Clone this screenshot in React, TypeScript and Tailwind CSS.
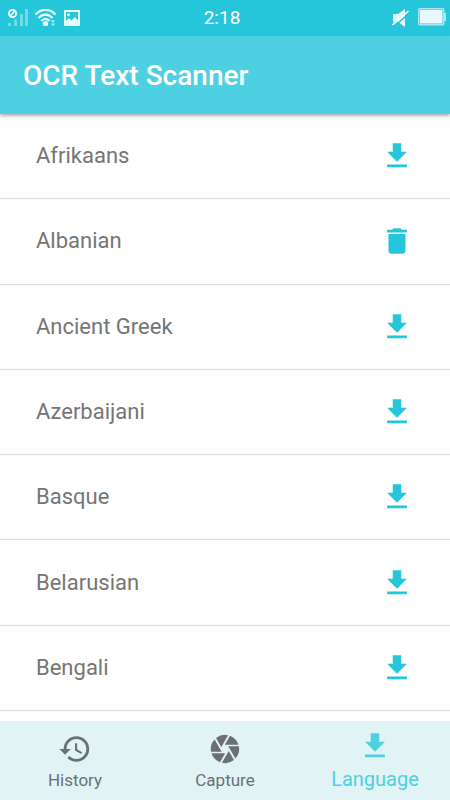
import { useState } from "react";
import { MdCamera, MdDelete, MdHistory } from "react-icons/md";

const initialLanguages = [
  { name: "Afrikaans", installed: false },
  { name: "Albanian", installed: true },
  { name: "Ancient Greek", installed: false },
  { name: "Azerbaijani", installed: false },
  { name: "Basque", installed: false },
  { name: "Belarusian", installed: false },
  { name: "Bengali", installed: false },
];

function DownloadIcon() {
  return (
    <svg viewBox="0 0 24 24" className="size-[34px]" fill="currentColor" aria-hidden="true">
      <path d="M19 9h-4V3H9v6H5l7 7 7-7zM5 18v2h14v-2H5z" />
    </svg>
  );
}

function StatusBar() {
  return (
    <div className="flex h-9 shrink-0 items-center justify-between bg-[#26c6da] pr-1 pl-2 text-white">
      <div className="flex flex-1 items-center gap-[7px]">
        {/* no signal */}
        <svg viewBox="0 0 20 18" className="h-[18px] w-5" fill="none" aria-hidden="true">
          <path
            d="M0 14h3v3H0zM6 10.5h3V17H6zM12 5h3v12h-3zM17 0h3v17h-3z"
            fill="#fff"
            fillOpacity="0.35"
          />
          <circle cx="4.500" cy="4.500" r="5.500" fill="#26c6da" />
          <circle cx="4.500" cy="4.500" r="3.600" stroke="#fff" strokeWidth="1.8" />
          <path d="M2 7l5-5" stroke="#fff" strokeWidth="1.6" />
        </svg>
        {/* wifi */}
        <svg viewBox="0 0 22 18" className="h-[18px] w-[22px]" fill="none" aria-hidden="true">
          <g stroke="#fff" strokeOpacity="0.92" strokeWidth="2.2">
            <path d="M0.500 5.500C6-0.800 15-0.800 20.500 5.500" />
            <path d="M3.500 9c4-4.600 10-4.600 14 0" />
            <path d="M6.500 12c2.300-2.800 5.700-2.800 8 0" />
          </g>
          <circle cx="10.500" cy="14.500" r="2.600" fill="#fff" />
          <path d="M16 13l2-2.500 2 2.500zM16 14.500h4L18 17z" fill="#fff" fillOpacity="0.7" />
        </svg>
        {/* picture */}
        <svg viewBox="0 0 16 16" className="size-4" aria-hidden="true">
          <path
            d="M1 0h14a1 1 0 011 1v14a1 1 0 01-1 1H1a1 1 0 01-1-1V1a1 1 0 011-1zM2 2v9l3-3 2.500 2.500L11 7l3 3.500V2z"
            fill="#fff"
            fillOpacity="0.9"
            fillRule="evenodd"
          />
          <circle cx="4.500" cy="4.700" r="1.500" fill="#fff" fillOpacity="0.9" />
        </svg>
      </div>
      <span className="pr-2.5 text-[19px] leading-6">2:18</span>
      <div className="flex flex-1 items-center justify-end gap-2">
        {/* muted */}
        <svg viewBox="0 0 18 20" className="h-5 w-[18px]" fill="none" aria-hidden="true">
          <path d="M1 6h5l7-5v18l-7-5H1z" fill="#fff" fillOpacity="0.88" />
          <path d="M2 18.500L18 4.500" stroke="#26c6da" strokeWidth="1.6" />
          <path d="M0.500 17L16.500 3" stroke="#fff" strokeWidth="1.6" />
        </svg>
        <svg viewBox="0 0 28 20" className="h-5 w-7" fill="none" aria-hidden="true">
          <rect x="0.750" y="0.750" width="25" height="16" rx="1" stroke="#a8e8f0" strokeWidth="1.5" />
          <rect x="2" y="2" width="22.500" height="13.500" fill="#e9f9fb" />
          <path d="M26 5h2v8h-2z" fill="#a8e8f0" />
        </svg>
      </div>
    </div>
  );
}

export default function App() {
  const [languages, setLanguages] = useState(initialLanguages);
  const [tab, setTab] = useState("Language");

  const toggle = (name: string) => {
    setLanguages(
      languages.map((l) => (l.name === name ? { ...l, installed: !l.installed } : l))
    );
  };

  const tabs = [
    { name: "History", icon: <MdHistory className="size-[34px]" /> },
    { name: "Capture", icon: <MdCamera className="size-[34px]" /> },
    { name: "Language", icon: <DownloadIcon /> },
  ];

  return (
    <div className="flex min-h-screen flex-col bg-white font-['Roboto',sans-serif]">
      <StatusBar />
      <header className="z-10 flex h-[78px] shrink-0 items-center bg-[#4dd0e1] px-[23px] pt-0.5 shadow-[0_2px_3px_rgba(0,0,0,0.3)]">
        <h1 className="text-[28px] leading-8 font-medium text-white">OCR Text Scanner</h1>
      </header>

      <main className="flex flex-1 flex-col pb-2.5">
        <ul className="flex flex-1 flex-col">
          {languages.map((lang) => (
            <li
              key={lang.name}
              className="flex min-h-20 flex-1 items-center justify-between border-b border-[#dcdcdc] px-9"
            >
              <span className="text-[22px] leading-7 text-[#757575]">{lang.name}</span>
              <button
                type="button"
                onClick={() => toggle(lang.name)}
                aria-label={`${lang.installed ? "Delete" : "Download"} ${lang.name}`}
                className="text-[#26c6da]"
              >
                {lang.installed ? <MdDelete className="size-[34px]" /> : <DownloadIcon />}
              </button>
            </li>
          ))}
        </ul>
      </main>

      <nav className="grid h-[79px] shrink-0 grid-cols-3 bg-[#e2f3f6]">
        {tabs.map((t) => (
          <button
            key={t.name}
            type="button"
            onClick={() => setTab(t.name)}
            className={`flex flex-col items-center ${
              tab === t.name ? "pt-2 text-[#4dd0e1]" : "pt-[11px] text-[#6b7072]"
            }`}
          >
            {t.icon}
            <span className={tab === t.name ? "text-xl leading-8" : "text-[17px] leading-7"}>
              {t.name}
            </span>
          </button>
        ))}
      </nav>
    </div>
  );
}
